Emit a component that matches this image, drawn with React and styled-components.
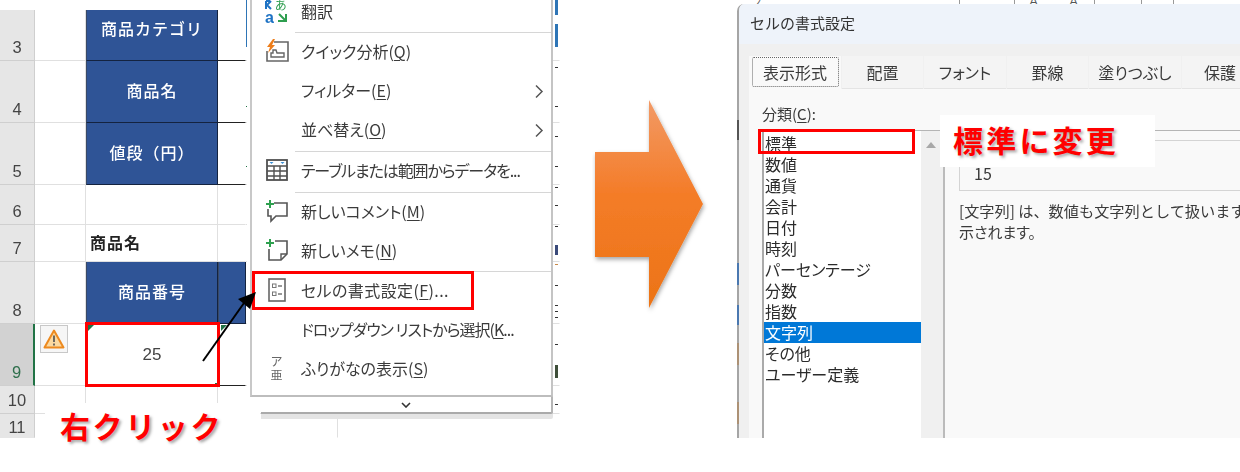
import React from "react";
import styled, { createGlobalStyle } from "styled-components";

const Global = createGlobalStyle`
  html, body { margin: 0; padding: 0; background: #fff; }
  body { font-family: "Noto Sans CJK JP", "Liberation Sans", sans-serif; }
`;

const Page = styled.div`
  display: flex;
  width: 1240px;
  height: 472px;
  overflow: hidden;
  background: #fff;
`;

/* ---------- spreadsheet ---------- */
const SheetArea = styled.section`
  position: relative;
  flex: none;
  width: 560px;
  height: 438px;
  padding-top: 10px;
  box-sizing: border-box;
`;
const Grid = styled.div`
  display: grid;
  grid-template-columns: 35px 51px 132px 28px 92px 1fr;
  grid-template-rows: 51px 62px 62px 40px 37px 62px 62px 28px 24px;
  height: 428px;
  filter: blur(0.3px);
`;
const RowHead = styled.div`
  display: flex;
  align-items: flex-end;
  justify-content: center;
  box-sizing: border-box;
  padding-bottom: ${(p) => (p.$last ? 1 : 4)}px;
  background: ${(p) => (p.$active ? "#d2d2d2" : "#e6e6e6")};
  border-bottom: 1px solid ${(p) => (p.$last ? "#e6e6e6" : "#cfcfcf")};
  border-right: ${(p) => (p.$active ? "2px solid #217346" : "1px solid #cfcfcf")};
  color: ${(p) => (p.$active ? "#2f6f4c" : "#444")};
  font: 16.5px/18px "Liberation Sans", sans-serif;
`;
const Cell = styled.div`
  box-sizing: border-box;
  border-right: 1px solid ${(p) => (p.$open ? "transparent" : "#e0e0e0")};
  border-bottom: 1px solid ${(p) => (p.$line ? "#222" : p.$plain ? "transparent" : "#e0e0e0")};
`;
const HeaderCell = styled.div`
  display: flex;
  align-items: center;
  justify-content: center;
  box-sizing: border-box;
  padding-bottom: ${(p) => p.$lift || 3}px;
  background: #2f5496;
  border-bottom: 1px solid #14233f;
  border-right: 1px solid #14233f;
  border-left: 1px solid #3a4a66;
  color: #fff;
  font-size: 16px;
  font-weight: 500;
  letter-spacing: 1px;
  white-space: nowrap;
`;
const LabelCell = styled.div`
  display: flex;
  align-items: center;
  padding: 0 0 3px 4px;
  box-sizing: border-box;
  border-right: 1px solid #e0e0e0;
  border-bottom: 1px solid #e0e0e0;
  color: #222;
  font-size: 16px;
  font-weight: 700;
  letter-spacing: 1px;
  white-space: nowrap;
`;
const ValueCell = styled.div`
  display: flex;
  align-items: center;
  justify-content: center;
  border-bottom: 1px solid #555;
  color: #444;
  font: 17px "Liberation Sans", sans-serif;
`;
const Tick = styled.i`
  position: absolute;
  left: ${(p) => p.$x || 555}px;
  top: ${(p) => p.$y}px;
  width: ${(p) => p.$w || 3}px;
  height: ${(p) => p.$h || 1}px;
  background: ${(p) => p.$c || "#333"};
`;
const GreenMark = styled.i`
  position: absolute;
  left: ${(p) => p.$x}px;
  top: 325px;
  width: 0;
  height: 0;
  border-top: 6px solid #217346;
  border-right: 6px solid transparent;
`;
const Handle = styled.i`
  position: absolute;
  left: 215px;
  top: 383px;
  width: 4px;
  height: 4px;
  background: #217346;
`;
const SmartTag = styled.div`
  position: absolute;
  left: 40px;
  top: 325px;
  display: flex;
  align-items: center;
  justify-content: center;
  width: 28px;
  height: 28px;
  box-sizing: border-box;
  border: 1px solid #c8c8c8;
  background: #f6f6f6;
`;
const CellOutline = styled.div`
  position: absolute;
  left: 85px;
  top: 322px;
  width: 135px;
  height: 65px;
  box-sizing: border-box;
  border: 3px solid #f00;
`;
const MenuOutline = styled.div`
  position: absolute;
  left: 252px;
  top: 271px;
  width: 222px;
  height: 39px;
  box-sizing: border-box;
  border: 3px solid #f00;
  z-index: 4;
`;
const Pointer = styled.svg`
  position: absolute;
  left: 195px;
  top: 280px;
  z-index: 5;
`;
const Callout = styled.div`
  position: absolute;
  left: ${(p) => p.$x}px;
  top: ${(p) => p.$y}px;
  width: ${(p) => p.$w}px;
  height: ${(p) => p.$h}px;
  padding: 0 0 4px ${(p) => p.$pad}px;
  box-sizing: border-box;
  display: flex;
  align-items: center;
  background: #fff;
  color: #f00;
  font-size: 30px;
  font-weight: 700;
  letter-spacing: ${(p) => p.$ls || 0}px;
  white-space: nowrap;
  text-shadow: 2px 2px 3px rgba(0, 0, 0, 0.35);
  z-index: 3;
`;
const MenuEdge = styled.i`
  position: absolute;
  left: 246px;
  top: 0;
  width: 3px;
  height: 47px;
  background: #2e75b6;
  z-index: 1;
`;

/* ---------- context menu ---------- */
const Menu = styled.div`
  position: absolute;
  left: 250px;
  top: 0;
  width: 303px;
  display: flex;
  flex-direction: column;
  z-index: 2;
  &::before {
    content: "";
    position: absolute;
    left: -3px;
    top: 0;
    width: 3px;
    height: 397px;
    background: #fff;
  }
`;
const MenuBody = styled.div`
  height: 397px;
  box-sizing: border-box;
  background: #fff;
  border-left: 2px solid #c8c8c8;
  border-right: 2px solid #c4c4c4;
  border-bottom: 2px solid #bdbdbd;
  overflow: hidden;
`;
const MenuList = styled.div`
  margin-top: -7px;
  filter: blur(0.3px);
`;
const Item = styled.div`
  display: flex;
  align-items: center;
  height: 39px;
  box-sizing: border-box;
  padding-bottom: 3px;
  color: #3b3b3b;
  font-size: 16px;
  font-feature-settings: "palt";
  letter-spacing: ${(p) => p.$ls || 0}px;
  white-space: nowrap;
  position: relative;
`;
const IconSlot = styled.span`
  display: flex;
  align-items: center;
  justify-content: center;
  flex: none;
  width: 49px;
  height: 100%;
  font-size: 12px;
  line-height: 14px;
  letter-spacing: 0;
  color: #666;
  text-align: center;
`;
const Sep = styled.div`
  height: 1px;
  margin: ${(p) => p.$before || 0}px 0 0 43px;
  background: #d6d6d6;
`;
const More = styled.svg`
  position: absolute;
  right: 7px;
  top: 12px;
`;
const Mnemonic = styled.span`
  text-decoration: underline;
  text-underline-offset: 2px;
`;
const MenuFoot = styled.div`
  display: flex;
  align-items: center;
  justify-content: center;
  height: 15px;
  margin-left: 11px;
  background: #fff;
  border-right: 2px solid #b5b5b5;
  border-bottom: 2px solid #aaa;
  border-bottom-right-radius: 2px;
  box-shadow: 0 5px 0 #e4e4e4;
`;

/* ---------- arrow ---------- */
const ArrowArea = styled.div`
  flex: none;
  width: 177px;
  padding: 98px 0 0 32px;
  box-sizing: border-box;
`;

/* ---------- dialog ---------- */
const DialogArea = styled.section`
  position: relative;
  flex: 1;
  height: 438px;
  display: flex;
  flex-direction: column;
`;
const RibbonScrap = styled.div`
  display: flex;
  height: 4px;
  overflow: hidden;
  flex: none;
`;
const ScrapBit = styled.span`
  flex: none;
  width: ${(p) => p.$w}px;
  height: 4px;
  box-sizing: border-box;
  border-right: 1px solid ${(p) => (p.$sep ? "#999" : "transparent")};
  color: #555;
  font: 13px/4px "Liberation Sans", sans-serif;
  text-align: center;
  overflow: hidden;
`;
const Dialog = styled.div`
  flex: 1;
  display: flex;
  flex-direction: column;
  min-height: 0;
  background: #f0f0f0;
  border-left: 2px solid #a5a5a5;
  border-top-left-radius: 7px;
  overflow: hidden;
  filter: blur(0.3px);
`;
const TitleBar = styled.div`
  flex: none;
  height: 40px;
  display: flex;
  align-items: center;
  box-sizing: border-box;
  padding: 0 0 4px 11px;
  background: #eef3fa;
  color: #333;
  font-size: 15px;
`;
const TabStrip = styled.div`
  flex: none;
  display: flex;
  margin: 12px 0 0 10px;
  height: 33px;
`;
const Tab = styled.div`
  flex: none;
  display: flex;
  align-items: center;
  justify-content: center;
  width: ${(p) => p.$w}px;
  box-sizing: border-box;
  margin-right: 1px;
  background: ${(p) => (p.$on ? "#f9f9f9" : "#f4f4f4")};
  border-bottom: 1px solid ${(p) => (p.$on ? "#f9f9f9" : "#e4e4e4")};
  color: #3a3a3a;
  font-size: 16px;
  font-feature-settings: "palt";
  white-space: nowrap;
`;
const FocusRing = styled.span`
  display: flex;
  align-items: center;
  justify-content: center;
  width: 85px;
  height: 28px;
  border: 1px dotted #666;
  border-radius: 2px;
`;
const Panel = styled.div`
  flex: 1;
  min-height: 0;
  margin-left: 10px;
  background: #f9f9f9;
  padding: 14px 0 0 13px;
  display: flex;
  flex-direction: column;
`;
const CategoryLabel = styled.div`
  flex: none;
  height: 27px;
  color: #3a3a3a;
  font-size: 15px;
  line-height: 22px;
`;
const Columns = styled.div`
  flex: 1;
  min-height: 0;
  display: flex;
  border-top: 1px solid #b5b5b5;
`;
const ListBox = styled.div`
  flex: none;
  width: 159px;
  box-sizing: border-box;
  padding-top: 2px;
  background: #fff;
  border-left: 2px solid #aaa;
`;
const ListRow = styled.div`
  height: 21px;
  padding-left: 1px;
  background: ${(p) => (p.$on ? "#0078d7" : "transparent")};
  color: ${(p) => (p.$on ? "#fff" : "#2b2b2b")};
  font-size: 16px;
  font-feature-settings: "palt";
  line-height: 21px;
  white-space: nowrap;
`;
const ScrollBar = styled.div`
  flex: none;
  width: 24px;
  box-sizing: border-box;
  padding: 11px 0 0 5px;
  background: #f0f0f0;
  border-right: 2px solid #bbb;
`;
const UpArrow = styled.i`
  display: block;
  width: 0;
  height: 0;
  border-left: 5px solid transparent;
  border-right: 5px solid transparent;
  border-bottom: 6px solid #a8a8a8;
`;
const Detail = styled.div`
  flex: 1;
  min-width: 0;
  overflow: hidden;
  padding: 9px 0 0 14px;
  background: #f9f9f9;
`;
const Sample = styled.div`
  height: 51px;
  box-sizing: border-box;
  padding: 21px 0 0 14px;
  border: 1px solid #d4d4d4;
  border-right: 0;
  color: #3a3a3a;
  font: 16px/22px "Noto Sans CJK JP", sans-serif;
`;
const Description = styled.div`
  margin-top: 8px;
  color: #3a3a3a;
`;
const DescLine = styled.div`
  font-size: ${(p) => (p.$fit ? 15 : 15.2)}px;
  font-feature-settings: ${(p) => (p.$fit ? '"palt"' : "normal")};
  line-height: 22px;
  white-space: nowrap;
`;
const ListOutline = styled.div`
  position: absolute;
  left: 21px;
  top: 129px;
  width: 157px;
  height: 25px;
  box-sizing: border-box;
  border: 3px solid #f00;
`;
const EdgeSliver = styled.i`
  position: absolute;
  left: 0;
  top: ${(p) => p.$y}px;
  width: 2px;
  height: ${(p) => p.$h}px;
  background: ${(p) => p.$c};
`;

/* ---------- icons ---------- */
const TranslateIcon = () => (
  <svg width="25" height="25" viewBox="0 0 25 25" fontFamily="Liberation Sans, sans-serif">
    <path d="M2 2v8M2 2h4M7 2L3 6l4 4" fill="none" stroke="#1f73c4" strokeWidth="2" />
    <text x="1" y="24" fontSize="16" fontWeight="700" fill="#1f73c4">a</text>
    <text x="11" y="11" fontSize="12" fill="#2e9e4f" fontFamily="Noto Sans CJK JP">あ</text>
    <path d="M14 22h8v-7M15 15l7 7" fill="none" stroke="#2e9e4f" strokeWidth="2" />
  </svg>
);
const QuickIcon = () => (
  <svg width="24" height="24" viewBox="0 0 24 24" fill="none">
    <path d="M2 12v10h21V3H9" stroke="#666" strokeWidth="1.6" />
    <path d="M6 18h13v-4h-7l-1-3H8v3H6z" stroke="#666" strokeWidth="1.4" />
    <path d="M8 0L2 8h3l-2 6 7-8H7l3-6z" fill="#ed7d1a" />
  </svg>
);
const TableIcon = () => (
  <svg width="22" height="22" viewBox="0 0 22 22" fill="none">
    <rect x="1" y="1" width="20" height="20" stroke="#505050" strokeWidth="1.8" />
    <path d="M1 7h20M1 12h20M1 17h20M8 7v14M14 7v14" stroke="#505050" strokeWidth="1.4" />
    <path d="M3.5 3l2 2 2-2zM14.5 3l2 2 2-2z" fill="#3a8fd6" />
  </svg>
);
const CommentIcon = () => (
  <svg width="24" height="24" viewBox="0 0 24 24" fill="none">
    <path d="M9 4h13v13H11l-5 5v-5H3V10" stroke="#555" strokeWidth="1.6" />
    <path d="M5 1v8M1 5h8" stroke="#2ea04f" strokeWidth="2" />
  </svg>
);
const NoteIcon = () => (
  <svg width="24" height="24" viewBox="0 0 24 24" fill="none">
    <path d="M10 3h12v13l-6 6H4V11" stroke="#555" strokeWidth="1.6" />
    <path d="M22 16h-6v6" stroke="#555" strokeWidth="1.4" />
    <path d="M5 1v8M1 5h8" stroke="#2ea04f" strokeWidth="2" />
  </svg>
);
const FormatIcon = () => (
  <svg width="18" height="24" viewBox="0 0 18 24" fill="none">
    <rect x="1" y="1" width="16" height="22" stroke="#666" strokeWidth="1.6" />
    <rect x="4.5" y="6" width="3.5" height="3.5" stroke="#777" />
    <rect x="4.5" y="14" width="3.5" height="3.5" stroke="#777" />
    <path d="M10 8h4M10 16h4" stroke="#777" strokeWidth="1.4" />
  </svg>
);
const Chevron = () => (
  <More width="10" height="15" viewBox="0 0 10 15" fill="none">
    <path d="M2 1.5l6 6-6 6" stroke="#555" strokeWidth="1.5" />
  </More>
);

const categories = ["標準", "数値", "通貨", "会計", "日付", "時刻", "パーセンテージ", "分数", "指数", "文字列", "その他", "ユーザー定義"];
const ticks = [
  { y: 0, h: 15, c: "#2e75b6" }, { y: 24, h: 23, c: "#2e75b6" }, { y: 67 }, { y: 106 }, { y: 136 }, { y: 166 }, { y: 187 },
  { y: 205 }, { y: 226 }, { y: 245, h: 10, c: "#3a4a7a" }, { y: 264, c: "#c98a4a" }, { y: 285 }, { y: 305 },
  { y: 311 }, { y: 317 }, { y: 344 }, { y: 365, h: 13, c: "#3f4f3a" }, { y: 404 },
  { y: 106, x: 246, c: "#217346" }, { y: 166, x: 246, c: "#217346" },
];

export default function App() {
  return (
    <Page>
      <Global />
      <SheetArea>
        <Grid>
          <RowHead>3</RowHead><Cell /><HeaderCell $lift={14}>商品カテゴリ</HeaderCell><Cell $line $open /><Cell /><Cell $open />
          <RowHead>4</RowHead><Cell /><HeaderCell>商品名</HeaderCell><Cell $line $open /><Cell /><Cell $open />
          <RowHead>5</RowHead><Cell /><HeaderCell>値段（円）</HeaderCell><Cell $line $open /><Cell /><Cell $open />
          <RowHead>6</RowHead><Cell /><Cell /><Cell $open /><Cell /><Cell $open />
          <RowHead>7</RowHead><Cell /><LabelCell>商品名</LabelCell><Cell $open /><Cell /><Cell $open />
          <RowHead>8</RowHead><Cell /><HeaderCell>商品番号</HeaderCell><HeaderCell /><Cell /><Cell $open />
          <RowHead $active>9</RowHead><Cell /><ValueCell>25</ValueCell><Cell $line $open /><Cell /><Cell $open />
          <RowHead>10</RowHead><Cell /><Cell /><Cell $open /><Cell /><Cell $open />
          <RowHead $last>11</RowHead><Cell $plain /><Cell $plain /><Cell $plain $open /><Cell $plain /><Cell $plain $open />
        </Grid>
        {ticks.map((t) => (
          <Tick key={`${t.x || 555}-${t.y}`} $x={t.x} $y={t.y} $h={t.h} $c={t.c} />
        ))}
        <MenuEdge />
        <GreenMark $x={88} />
        <GreenMark $x={221} />
        <Handle />
        <SmartTag>
          <svg width="22" height="20" viewBox="0 0 22 20">
            <path d="M11 1.5L20.5 18.5H1.5z" fill="#fbd9a0" stroke="#ed8a1f" strokeWidth="2" strokeLinejoin="round" />
            <path d="M11 6.5v6.5M11 14.5v2" stroke="#555" strokeWidth="1.7" />
          </svg>
        </SmartTag>
        <CellOutline />
        <Menu>
          <MenuBody>
            <MenuList>
              <Item><IconSlot><TranslateIcon /></IconSlot>翻訳</Item>
              <Sep />
              <Item><IconSlot><QuickIcon /></IconSlot>クイック分析(<Mnemonic>Q</Mnemonic>)</Item>
              <Item><IconSlot />フィルター(<Mnemonic>E</Mnemonic>)<Chevron /></Item>
              <Item><IconSlot />並べ替え(<Mnemonic>O</Mnemonic>)<Chevron /></Item>
              <Sep $before={1} />
              <Item $ls={-1.1}><IconSlot><TableIcon /></IconSlot>テーブルまたは範囲からデータを...</Item>
              <Sep $before={1} />
              <Item><IconSlot><CommentIcon /></IconSlot>新しいコメント(<Mnemonic>M</Mnemonic>)</Item>
              <Item><IconSlot><NoteIcon /></IconSlot>新しいメモ(<Mnemonic>N</Mnemonic>)</Item>
              <Sep />
              <Item $ls={0.4}><IconSlot><FormatIcon /></IconSlot>セルの書式設定(<Mnemonic>F</Mnemonic>)...</Item>
              <Item $ls={-1}><IconSlot />ドロップダウン リストから選択(<Mnemonic>K</Mnemonic>...</Item>
              <Item><IconSlot><span>ア<br />亜</span></IconSlot>ふりがなの表示(<Mnemonic>S</Mnemonic>)</Item>
            </MenuList>
          </MenuBody>
          <MenuFoot>
            <svg width="10" height="6" viewBox="0 0 10 6" fill="none">
              <path d="M1 1l4 4 4-4" stroke="#333" strokeWidth="1.6" />
            </svg>
          </MenuFoot>
        </Menu>
        <MenuOutline />
        <Pointer width="65" height="90" viewBox="0 0 65 90">
          <path d="M8 81L49 23" stroke="#000" strokeWidth="2" />
          <path d="M61 12L43 19 55 29z" fill="#000" />
        </Pointer>
        <Callout $x={45} $y={403} $w={215} $h={47} $pad={15} $ls={2.6}>右クリック</Callout>
      </SheetArea>

      <ArrowArea>
        <svg width="125" height="225" viewBox="0 0 125 225">
          <defs>
            <linearGradient id="arrowFill" x1="0" y1="0" x2="0" y2="1">
              <stop offset="0" stopColor="#f29a66" />
              <stop offset="0.45" stopColor="#f47c28" />
              <stop offset="1" stopColor="#ec7416" />
            </linearGradient>
            <filter id="arrowShadow" x="-10%" y="-10%" width="125%" height="125%">
              <feDropShadow dx="1" dy="2.5" stdDeviation="2" floodColor="#000" floodOpacity="0.35" />
            </filter>
          </defs>
          <path d="M3 54H57V2L111 106 57 210V159H3z" fill="url(#arrowFill)" filter="url(#arrowShadow)" />
        </svg>
      </ArrowArea>

      <DialogArea>
        <RibbonScrap>
          <ScrapBit $w={40}>フ</ScrapBit>
          <ScrapBit $w={183} $sep />
          <ScrapBit $w={55} $sep />
          <ScrapBit $w={38}>A</ScrapBit>
          <ScrapBit $w={42} $sep>A</ScrapBit>
          <ScrapBit $w={47} $sep />
          <ScrapBit $w={32} $sep />
          <ScrapBit $w={66} />
        </RibbonScrap>
        <Dialog>
          <TitleBar>セルの書式設定</TitleBar>
          <TabStrip>
            <Tab $on $w={92}><FocusRing>表示形式</FocusRing></Tab>
            <Tab $w={81}>配置</Tab>
            <Tab $w={82}>フォント</Tab>
            <Tab $w={81}>罫線</Tab>
            <Tab $w={92}>塗りつぶし</Tab>
            <Tab $w={76}>保護</Tab>
          </TabStrip>
          <Panel>
            <CategoryLabel>分類(<Mnemonic>C</Mnemonic>):</CategoryLabel>
            <Columns>
              <ListBox>
                {categories.map((c) => (
                  <ListRow key={c} $on={c === "文字列"}>{c}</ListRow>
                ))}
              </ListBox>
              <ScrollBar><UpArrow /></ScrollBar>
              <Detail>
                <Sample>15</Sample>
                <Description>
                  <DescLine>[文字列] は、数値も文字列として扱います</DescLine>
                  <DescLine $fit>示されます。</DescLine>
                </Description>
              </Detail>
            </Columns>
          </Panel>
        </Dialog>
        <EdgeSliver $y={120} $h={20} $c="#555" />
        <EdgeSliver $y={263} $h={22} $c="#4a78b0" />
        <EdgeSliver $y={305} $h={20} $c="#4a78b0" />
        <EdgeSliver $y={343} $h={22} $c="#ac9175" />
        <EdgeSliver $y={402} $h={22} $c="#ac9175" />
        <ListOutline />
        <Callout $x={203} $y={115} $w={215} $h={52} $pad={13} $ls={3.2}>標準に変更</Callout>
      </DialogArea>
    </Page>
  );
}
